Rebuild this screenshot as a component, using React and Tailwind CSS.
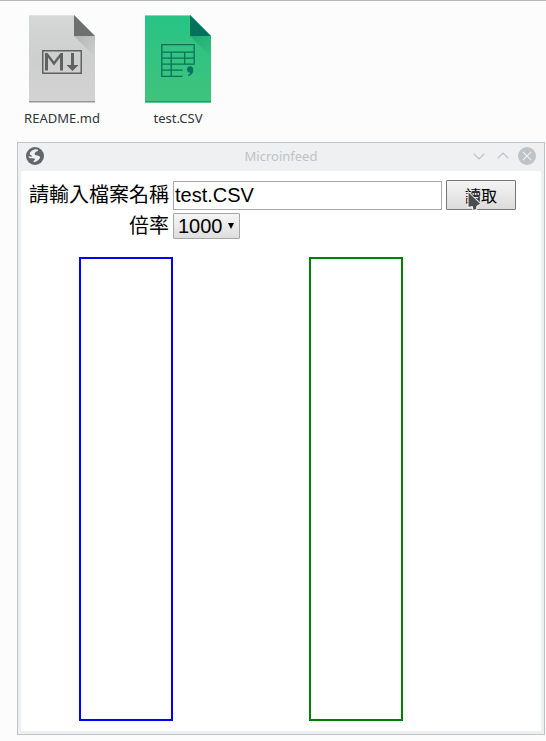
function MarkdownIcon() {
  return (
    <svg width="66" height="88" viewBox="0 0 66 88" className="block">
      <defs>
        <linearGradient id="paper" x1="0" y1="0" x2="0" y2="1">
          <stop offset="0" stopColor="#d5d8d7" />
          <stop offset="0.5" stopColor="#cecece" />
          <stop offset="1" stopColor="#d3d3d3" />
        </linearGradient>
        <linearGradient id="paperFold" x1="0" y1="0" x2="1" y2="1">
          <stop offset="0" stopColor="#b2b3b3" />
          <stop offset="1" stopColor="#d0d0d0" />
        </linearGradient>
      </defs>
      <path d="M0 0H45L66 21V88H0Z" fill="url(#paper)" />
      <path d="M0 .5H45" stroke="#e2e5e4" />
      <path d="M45 21H66V42Z" fill="url(#paperFold)" />
      <path d="M45 0L66 21H45Z" fill="#6e6f6f" />
      <path d="M0 86.5H66" stroke="#989898" />
      <path d="M0 87.5H66" stroke="#cacaca" />
      <rect x="13.75" y="35.75" width="38.5" height="22.5" fill="none" stroke="#606161" strokeWidth="1.5" />
      <path d="M16 55.5V38H18.5L25 46.5L31.5 38H34V55.5H31V42.5L25 50.5L19 42.5V55.5Z" fill="#606161" />
      <path d="M42 38H45V50H49.5L43.5 56L37.5 50H42Z" fill="#606161" />
    </svg>
  );
}

function CsvIcon() {
  return (
    <svg width="66" height="88" viewBox="0 0 66 88" className="block">
      <defs>
        <linearGradient id="sheet" x1="0" y1="0" x2="0" y2="1">
          <stop offset="0" stopColor="#27c485" />
          <stop offset="1" stopColor="#40c37c" />
        </linearGradient>
        <linearGradient id="sheetFold" x1="0" y1="0" x2="1" y2="1">
          <stop offset="0" stopColor="#20a872" />
          <stop offset="1" stopColor="#30c380" />
        </linearGradient>
      </defs>
      <path d="M0 0H45L66 21V88H0Z" fill="url(#sheet)" />
      <path d="M0 .5H45" stroke="#7edcb5" />
      <path d="M45 21H66V42Z" fill="url(#sheetFold)" />
      <path d="M45 0L66 21H45Z" fill="#04725a" />
      <path d="M0 86.5H66" stroke="#309766" />
      <path d="M0 87.5H66" stroke="#62c493" />
      <path
        d="M37.5 61.3H16.8V29.7H49.2V49.2H16.8M16.8 37.2H49.2M16.8 43.2H49.2M16.8 55.2H37.5M26.2 37.2V61.3M39.7 37.2V49.2"
        fill="none"
        stroke="#08735a"
        strokeWidth="1.3"
      />
      <path d="M45 51.3C47.2 51.3 48.3 52.8 48.3 55C48.3 58 46.5 60.5 43 61.2V59.8C44.5 59.3 45 58.6 45 57.7C43 57.7 42 56.3 42 54.5C42 52.7 43.2 51.3 45 51.3Z" fill="#08735a" />
    </svg>
  );
}

function FileItem({ icon, name }) {
  return (
    <div className="flex w-[116px] flex-col items-center">
      {icon}
      <div className="mt-[6px] font-['Noto_Sans',sans-serif] text-[13px] leading-[18px] text-[#31363b]">{name}</div>
    </div>
  );
}

function TitleBar() {
  return (
    <div className="relative flex h-7 items-center justify-between pl-[5px] pr-[5px]">
      <svg width="18" height="18" viewBox="0 0 18 18" className="-mt-0.5">
        <circle cx="9" cy="9" r="9" fill="#60666a" />
        <path d="M11.8 2.4L12 4L9.8 4.8L8.6 6.6L9 8L11.6 8.4L13.8 9.6L14 11L12.4 13L10.2 14.4L8 15.2L7.4 14.2L9 12.6L8.6 11.6L6.2 11.2L3.6 11.2L2.2 9.2L4.6 9.4L6.2 9.8L5.8 8.8L3.8 7.6L3.8 5.8L6 3.4L9 2.2Z" fill="#eff0f1" />
      </svg>
      <div className="absolute inset-x-0 top-[4px] text-center font-['Noto_Sans',sans-serif] text-[13px] leading-[18px] text-[#bdc3c7]">
        Microinfeed
      </div>
      <div className="-mt-0.5 flex items-center gap-3">
        <svg width="12" height="12" viewBox="0 0 12 12" fill="none" stroke="#b9bec2" strokeWidth="1.1">
          <path d="M.7 3.7L6 9L11.3 3.7" />
        </svg>
        <svg width="12" height="12" viewBox="0 0 12 12" fill="none" stroke="#b9bec2" strokeWidth="1.1">
          <path d="M.7 8.3L6 3L11.3 8.3" />
        </svg>
        <svg width="18" height="18" viewBox="0 0 18 18" className="-ml-[3px]">
          <circle cx="9" cy="9" r="9" fill="#bdc3c7" />
          <path d="M4.8 4.8L13.2 13.2M13.2 4.8L4.8 13.2" stroke="#eff0f1" strokeWidth="1.2" />
        </svg>
      </div>
    </div>
  );
}

export default function App() {
  return (
    <div className="h-[741px] w-[546px] overflow-hidden border-t border-[#b9b9b9] bg-[#fcfcfc] font-['Liberation_Sans','Noto_Sans_CJK_TC',sans-serif] text-black">
      <div className="flex h-[141px] pl-1 pt-[14px]">
        <FileItem icon={<MarkdownIcon />} name="README.md" />
        <FileItem icon={<CsvIcon />} name="test.CSV" />
      </div>
      <div className="ml-[17px] h-[593px] w-[528px] border border-[#bdc3c7] bg-[#eff0f1] px-[3px] pb-[3px]">
        <TitleBar />
        <div className="h-[560px] bg-white pt-[9px]">
          <div className="flex h-[30px] items-center">
            <div className="w-[148px] text-right text-[20px] leading-[30px]">請輸入檔案名稱</div>
            <div className="ml-1 mt-px flex h-[29px] w-[269px] items-center border border-[#a9a9a9] bg-white pl-px text-[20px] leading-[27px]">
              test.CSV
            </div>
            <button className="relative ml-1 h-[30px] w-[70px] rounded-[1px] border border-[#777] bg-linear-to-b from-[#f4f4f4] to-[#dcdcdc] pt-[3px] text-[16px] leading-[25px]">
              讀取
              <svg width="16" height="22" viewBox="0 0 16 22" className="absolute left-[20px] top-[10px]">
                <path d="M1 .5V16.5L5.4 15.6L6 19.5L9.8 18.5V15.2L13.8 13Z" fill="#4b4d50" stroke="#fff" strokeWidth="1" />
              </svg>
            </button>
          </div>
          <div className="mt-[3px] flex h-[26px] items-center">
            <div className="w-[148px] text-right text-[20px] leading-[26px]">倍率</div>
            <div className="ml-1 flex h-[26px] w-[67px] items-center rounded-[1px] border border-[#a6a6a6] bg-linear-to-b from-[#f5f5f5] to-[#dedede] pl-1 text-[20px] leading-6">
              1000
              <svg width="6" height="6" viewBox="0 0 6 6" className="-mt-px ml-[5px]">
                <path d="M0 0H6L3 6Z" fill="#000" />
              </svg>
            </div>
          </div>
          <div className="ml-[58px] mt-[18px] flex gap-[136px]">
            <div className="h-[464px] w-[94px] border-2 border-[#0000ff]" />
            <div className="h-[464px] w-[94px] border-2 border-[#008000]" />
          </div>
        </div>
      </div>
    </div>
  );
}
